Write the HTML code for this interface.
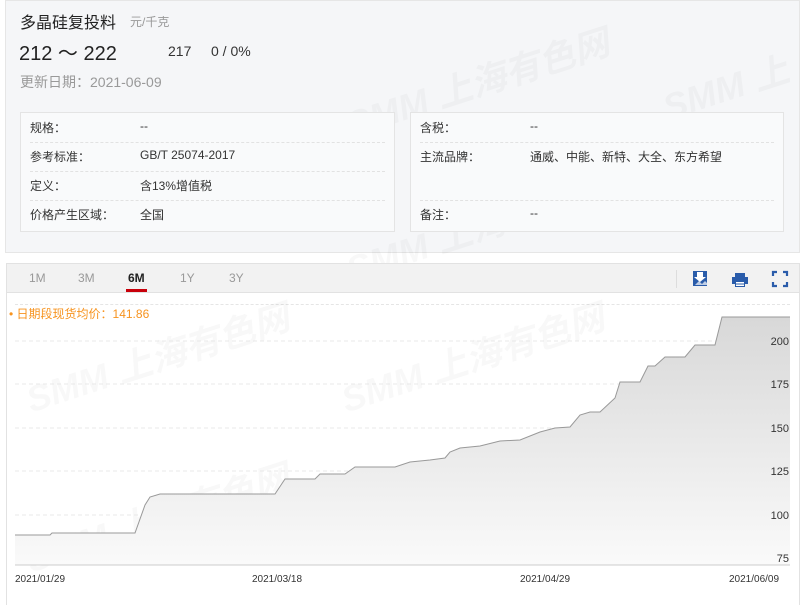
<!DOCTYPE html>
<html><head><meta charset="utf-8"><style>
*{margin:0;padding:0;box-sizing:border-box}
body{width:803px;height:605px;background:#fff;font-family:"Liberation Sans","Noto Sans CJK SC",sans-serif;position:relative;overflow:hidden;color:#333}
.a{position:absolute}
.top{left:5px;top:0;width:795px;height:253px;background:#f5f6f8;border:1px solid #e6e6e6}
.box{top:112px;height:120px;background:#f9fafb;border:1px solid #e4e4e4}
.row{position:absolute;left:9px;right:9px;font-size:12px;color:#333}
.row span{position:absolute;left:110px;white-space:nowrap}
.dash{position:absolute;left:9px;right:9px;border-top:1px dashed #e2e2e2}
.wm{position:absolute;color:rgba(0,0,0,0.028);font-size:36px;font-weight:bold;font-style:italic;transform:rotate(-18deg);white-space:nowrap}
</style></head><body>
<div class="a top"></div>
<div class="wm" style="left:340px;top:55px">SMM 上海有色网</div>
<div class="wm" style="left:660px;top:60px">SMM 上</div>
<div class="wm" style="left:340px;top:200px">SMM 上海有色网</div>
<div class="a" style="left:20px;top:9px;font-size:16px;color:#222">多晶硅复投料</div>
<div class="a" style="left:130px;top:13px;font-size:12px;color:#999">元/千克</div>
<div class="a" style="left:19px;top:37px;font-size:20px;color:#222">212 ～ 222</div>
<div class="a" style="left:168px;top:43px;font-size:14px;color:#333">217</div>
<div class="a" style="left:211px;top:43px;font-size:14px;color:#333">0 / 0%</div>
<div class="a" style="left:20px;top:72px;font-size:14px;color:#999">更新日期：2021-06-09</div>
<div class="a box" style="left:20px;width:375px">
<div class="row" style="top:6px">规格：<span>--</span></div><div class="dash" style="top:29px"></div>
<div class="row" style="top:35px">参考标准：<span>GB/T 25074-2017</span></div><div class="dash" style="top:58px"></div>
<div class="row" style="top:64px">定义：<span>含13%增值税</span></div><div class="dash" style="top:87px"></div>
<div class="row" style="top:93px">价格产生区域：<span>全国</span></div>
</div>
<div class="a box" style="left:410px;width:374px">
<div class="row" style="top:6px">含税：<span>--</span></div><div class="dash" style="top:29px"></div>
<div class="row" style="top:35px">主流品牌：<span>通威、中能、新特、大全、东方希望</span></div><div class="dash" style="top:87px"></div>
<div class="row" style="top:93px">备注：<span>--</span></div>
</div>

<div class="a" style="left:6px;top:263px;width:794px;height:342px;border:1px solid #e2e2e2;border-bottom:none"></div>
<div class="a" style="left:7px;top:264px;width:792px;height:29px;background:#f2f2f2;border-bottom:1px solid #e2e2e2"></div>
<div class="a" style="left:29px;top:271px;font-size:12px;color:#999">1M</div>
<div class="a" style="left:78px;top:271px;font-size:12px;color:#999">3M</div>
<div class="a" style="left:128px;top:271px;font-size:12px;color:#222;font-weight:bold">6M</div>
<div class="a" style="left:126px;top:289px;width:21px;height:3px;background:#c8000a"></div>
<div class="a" style="left:180px;top:271px;font-size:12px;color:#999">1Y</div>
<div class="a" style="left:229px;top:271px;font-size:12px;color:#999">3Y</div>
<div class="a" style="left:676px;top:270px;width:1px;height:18px;background:#ddd"></div>
<svg class="a" style="left:690px;top:268px" width="100" height="22" viewBox="0 0 100 22">
<rect x="3" y="3" width="14" height="15" fill="#2a5caa"/><path d="M7 4h6v5h3l-6 5-6-5h3z" fill="#fff"/><path d="M5 17l4-4 3 3 3-3 2 2v2z" fill="#fff" opacity=".7"/>
<path d="M45 5h10v4h-10z M42 9h16v7h-16z M45 13h10v6h-10z" fill="#2a5caa"/><rect x="46" y="14" width="8" height="1.5" fill="#fff"/><rect x="46" y="16.5" width="8" height="1.5" fill="#fff"/>
<path d="M83 8V4h4M93 4h4v4M97 14v4h-4M87 18h-4v-4" stroke="#2a5caa" stroke-width="2.2" fill="none"/>
</svg>
<div class="a" style="left:15px;top:304px;width:775px;border-top:1px dashed #e5e5e5"></div>
<div class="a" style="left:9px;top:305px;font-size:12px;color:#f7931e">• 日期段现货均价：141.86</div>
<div class="wm" style="left:20px;top:330px">SMM 上海有色网</div>
<div class="wm" style="left:335px;top:330px">SMM 上海有色网</div>
<div class="wm" style="left:20px;top:490px">SMM 上海有色网</div>
<svg class="a" style="left:0;top:293px" width="803" height="312" viewBox="0 293 803 312">
<defs><linearGradient id="g" x1="0" y1="0" x2="0" y2="1"><stop offset="0" stop-color="#d8d8d8"/><stop offset="1" stop-color="#fafafa"/></linearGradient></defs>
<g stroke="#e8e8e8" stroke-dasharray="4 3"><line x1="15" x2="790" y1="341" y2="341"/><line x1="15" x2="790" y1="384" y2="384"/><line x1="15" x2="790" y1="428" y2="428"/><line x1="15" x2="790" y1="471" y2="471"/><line x1="15" x2="790" y1="515" y2="515"/><line x1="15" x2="790" y1="558" y2="558"/></g>
<path d="M15 535L50 535L52 533L135 533L145 505L150 497L160 494L275 494L285 479L315 479L320 474L345 474L355 467L395 467L410 462L430 460L445 458L450 452L460 448L480 446L500 441L520 440L540 432L555 428L570 427L580 415L590 412L600 412L615 398L620 382L640 382L648 366L655 366L665 357L685 357L695 345L715 345L722 317L790 317L790 565L15 565Z" fill="url(#g)"/>
<path d="M15 535L50 535L52 533L135 533L145 505L150 497L160 494L275 494L285 479L315 479L320 474L345 474L355 467L395 467L410 462L430 460L445 458L450 452L460 448L480 446L500 441L520 440L540 432L555 428L570 427L580 415L590 412L600 412L615 398L620 382L640 382L648 366L655 366L665 357L685 357L695 345L715 345L722 317L790 317" fill="none" stroke="#999" stroke-width="1"/>
<line x1="15" x2="790" y1="565" y2="565" stroke="#ccc"/>
<g font-size="11" fill="#333" font-family="Liberation Sans,sans-serif" text-anchor="end"><text x="789" y="345">200</text><text x="789" y="388">175</text><text x="789" y="432">150</text><text x="789" y="475">125</text><text x="789" y="519">100</text><text x="789" y="562">75</text></g>
<g font-size="10" fill="#333" font-family="Liberation Sans,sans-serif"><text x="15" y="582">2021/01/29</text><text x="252" y="582">2021/03/18</text><text x="520" y="582">2021/04/29</text><text x="729" y="582">2021/06/09</text></g>
</svg>
</body></html>
